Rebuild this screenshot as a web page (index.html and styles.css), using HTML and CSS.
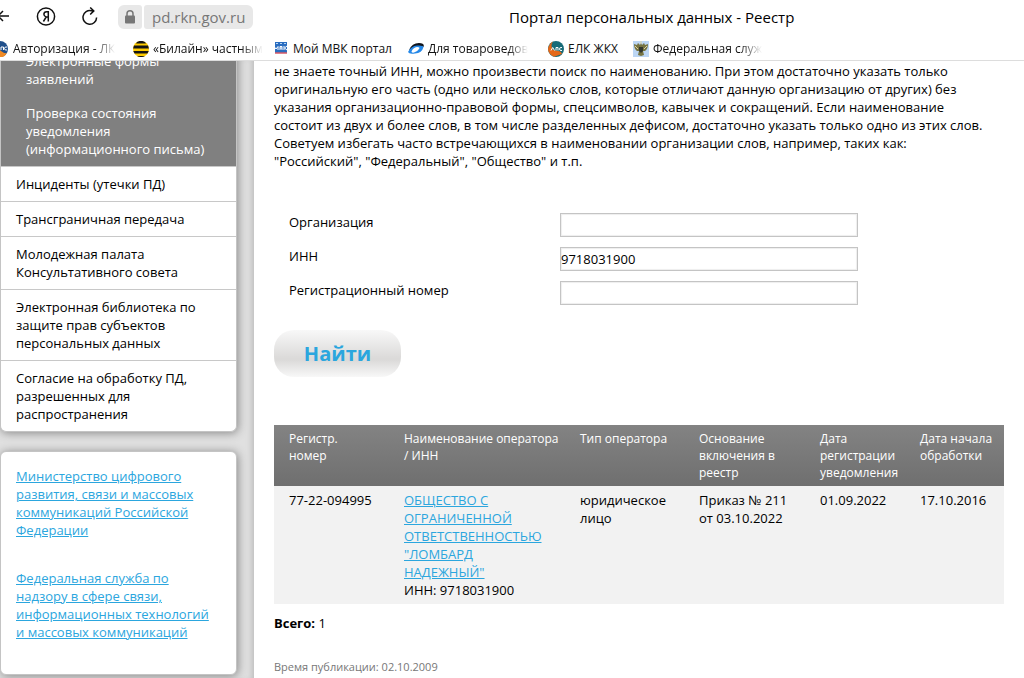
FILE: index.html
```html
<!DOCTYPE html>
<html lang="ru">
<head>
<meta charset="utf-8">
<title>Портал персональных данных - Реестр</title>
<link rel="stylesheet" href="styles.css">
</head>
<body>
<header class="browser">
  <div class="toolbar">
    <div class="nav">
      <button class="icon-btn back" aria-label="Назад"><svg width="12" height="18" viewBox="0 0 12 18"><path d="M-3 8H9M3 3L-2 8L3 13"/></svg></button>
      <button class="icon-btn ya" aria-label="Яндекс"><svg width="20" height="20" viewBox="0 0 20 20"><circle cx="10" cy="9.500" r="8.600"/><path d="M12.300 14.500V4.700H10.700C8.900 4.700 7.900 5.900 7.900 7.300C7.900 8.800 8.700 9.500 10.200 10H12.300M10.200 10L7.400 14.500"/></svg></button>
      <button class="icon-btn reload" aria-label="Обновить"><svg width="18" height="20" viewBox="0 0 18 20"><path d="M15.600 10.500A6.800 6.800 0 1 1 10.500 3.800H12.500M9.200 .5L12.800 3.900L9.200 7.500"/></svg></button>
      <button class="lock" aria-label="Защита"><svg width="12" height="14" viewBox="0 0 12 14"><rect x="1" y="5.500" width="10" height="8" rx="1" fill="#777"/><path d="M3 6V3.800A3 3 0 0 1 9 3.800V6" fill="none" stroke="#777" stroke-width="1.500"/></svg></button>
      <button class="host">pd.rkn.gov.ru</button>
    </div>
    <div class="page-title">Портал персональных данных - Реестр</div>
  </div>
  <nav class="bookmarks">
    <a href="#" class="bm bm-1"><svg width="16" height="16" viewBox="0 0 16 16"><circle cx="8" cy="8" r="8" fill="#1f4f8b"/><path d="M0 9Q5 7 9 10T15 12A8 8 0 0 1 0 9Z" fill="#f08a24"/><path d="M9 9V6H11.500V9M15 6Q12.500 5.500 12.500 7.500T15 9" fill="none" stroke="#fff" stroke-width="1"/></svg><span class="fade">Авторизация - ЛК</span></a>
    <a href="#" class="bm bm-2"><svg width="16" height="16" viewBox="0 0 16 16"><circle cx="8" cy="8" r="8" fill="#fc0"/><path d="M4 1A8 8 0 0 1 12 1L13 2.500H3ZM1 4.500H15L15.900 7.500H.1ZM.3 10H15.700L14.500 12.500H1.500ZM4 14.900H12A8 8 0 0 1 4 14.900Z" fill="#151515"/></svg><span class="fade">«Билайн» частным</span></a>
    <a href="#" class="bm bm-3"><svg width="16" height="16" viewBox="0 0 16 16"><path d="M2 1H14V12H2Z" fill="#2a6dc0"/><path d="M3 2.500H5M7 2.500H9M11 2.500H13" stroke="#b9d5f2"/><path d="M1 9V5.500L3 8L5 5.500V9M7 9V5.500H9V9M7 7H9M11 5V9M14 5L11.500 7L14 9" fill="none" stroke="#fff" stroke-width="1"/><path d="M2 12H14" stroke="#d75b68" stroke-width="1.500"/></svg><span>Мой МВК портал</span></a>
    <a href="#" class="bm bm-4"><svg width="16" height="16" viewBox="0 0 16 16"><path d="M1 9Q4 2 11 2Q17 2 15.500 6Q12 4 8 6T1 9Z" fill="#10141c"/><path d="M0 11Q3 5 9 4.500Q15 4 15.500 6Q14 12 7 12.500Q1 13.500 0 11Z" fill="#2588e8"/><path d="M3.500 10.500Q5 6.500 9 6Q12.500 6 11 8Q9 11 6 11.500Q3.500 12 3.500 10.500Z" fill="#fff"/></svg><span class="fade">Для товароведов</span></a>
    <a href="#" class="bm bm-5"><svg width="16" height="16" viewBox="0 0 16 16"><circle cx="8" cy="8" r="8" fill="#176b78"/><path d="M5 .6Q1 3 0 8Q0 13 6 15.700L14 13Q13 10 10 10L5 9Q2 5 5 .6Z" fill="#e46818"/><path d="M3 9.500L4.700 6.500L6.500 9.500M8 9.500V6.500H10V9.500M14 6.500Q11.500 6 11.500 8T14 9.500" fill="none" stroke="#fff" stroke-width="1"/></svg><span>ЕЛК ЖКХ</span></a>
    <a href="#" class="bm bm-6"><svg width="16" height="16" viewBox="0 0 16 16"><path d="M0 0H16V16H0Z" fill="#bcd6f4"/><path d="M7 4L5 2L4 4L1 3Q1 8 4 10L6 10L5 14L8 15L11 14L10 10L12 10Q15 8 15 3L12 4L11 2L9 4L8 2Z" fill="#767442"/><path d="M6 6H10V10L8 12L6 10Z" fill="#32372f"/><path d="M2 5L5 8M14 5L11 8M8 0V3" stroke="#ded3a2"/></svg><span class="fade">Федеральная служ</span></a>
  </nav>
</header>
<div class="page">
  <aside class="sidebar">
    <nav class="card menu">
      <div class="submenu">
        <a href="#">Электронные формы заявлений</a>
        <a href="#">Проверка состояния уведомления (информационного письма)</a>
      </div>
      <a href="#" class="item">Инциденты (утечки ПД)</a>
      <a href="#" class="item">Трансграничная передача</a>
      <a href="#" class="item">Молодежная палата Консультативного совета</a>
      <a href="#" class="item">Электронная библиотека по защите прав субъектов персональных данных</a>
      <a href="#" class="item">Согласие на обработку ПД, разрешенных для распространения</a>
    </nav>
    <div class="card links">
      <a href="#">Министерство цифрового развития, связи и массовых коммуникаций Российской Федерации</a>
      <a href="#">Федеральная служба по надзору в сфере связи, информационных технологий и массовых коммуникаций</a>
    </div>
  </aside>
  <main class="content">
    <p class="hint">не знаете точный ИНН, можно произвести поиск по наименованию. При этом достаточно указать только<br>оригинальную его часть (одно или несколько слов, которые отличают данную организацию от других) без<br>указания организационно-правовой формы, спецсимволов, кавычек и сокращений. Если наименование<br>состоит из двух и более слов, в том числе разделенных дефисом, достаточно указать только одно из этих слов.<br>Советуем избегать часто встречающихся в наименовании организации слов, например, таких как:<br>"Российский", "Федеральный", "Общество" и т.п.</p>
    <form class="search">
      <div class="fields">
        <label for="org">Организация</label><input id="org" type="text">
        <label for="inn">ИНН</label><input id="inn" type="text" value="9718031900">
        <label for="reg">Регистрационный номер</label><input id="reg" type="text">
      </div>
      <button type="button" class="find">Найти</button>
    </form>
    <table class="results">
      <colgroup><col class="c-num"><col class="c-name"><col class="c-type"><col class="c-base"><col class="c-date"><col></colgroup>
      <thead>
        <tr><th>Регистр.<br>номер</th><th>Наименование оператора / ИНН</th><th>Тип оператора</th><th>Основание включения в реестр</th><th>Дата регистрации уведомления</th><th>Дата начала обработки</th></tr>
      </thead>
      <tbody>
        <tr><td>77-22-094995</td><td><a href="#">ОБЩЕСТВО С ОГРАНИЧЕННОЙ ОТВЕТСТВЕННОСТЬЮ "ЛОМБАРД<br>НАДЕЖНЫЙ"</a><br>ИНН: 9718031900</td><td>юридическое лицо</td><td>Приказ № 211<br>от 03.10.2022</td><td>01.09.2022</td><td>17.10.2016</td></tr>
      </tbody>
    </table>
    <p class="total"><b>Всего:</b> 1</p>
    <p class="published">Время публикации: 02.10.2009</p>
  </main>
</div>
</body>
</html>
```
FILE: styles.css
```css
* { box-sizing: border-box; }
body {
  margin: 0;
  height: 100vh;
  overflow: hidden;
  display: flex;
  flex-direction: column;
  font: 13px/18px "Open Sans", "Noto Sans", sans-serif;
  color: #000;
  background: #fff;
}
button { border: 0; padding: 0; background: none; font: inherit; }
p { margin: 0; }
a { color: #2ba6de; }

.browser {
  flex: none;
  background: #fff;
  border-bottom: 1px solid #ddd;
}
.toolbar { display: flex; align-items: center; height: 34px; }
.nav { display: flex; align-items: center; width: 509px; }
.icon-btn { display: flex; }
.icon-btn svg { fill: none; stroke: #111; stroke-width: 1.5; }
.ya { margin-left: 24px; }
.reload { margin-left: 25px; }
.lock {
  display: flex;
  align-items: center;
  justify-content: center;
  width: 24px;
  height: 24px;
  margin-left: 19px;
  border-radius: 6px 3px 3px 6px;
  background: #e8e8e8;
}
.host {
  height: 24px;
  margin-left: 2px;
  padding: 0 8px;
  border-radius: 3px 6px 6px 3px;
  background: #e8e8e8;
  color: #777;
  font: 15px/24px "Open Sans", sans-serif;
}
.page-title { font: 15px/20px "Open Sans", sans-serif; white-space: nowrap; }
.bookmarks { display: flex; height: 26px; padding-top: 4px; }
.bm {
  flex: none;
  display: flex;
  align-items: center;
  gap: 4px;
  color: #111;
  text-decoration: none;
  font-size: 12px;
  white-space: nowrap;
}
.bm svg { flex: none; }
.bm-1 { width: 127px; margin-left: -8px; margin-right: 14px; gap: 5px; }
.bm-2 { width: 127px; margin-right: 13px; }
.bm-3 { width: 135px; }
.bm-4 { width: 124px; margin-right: 16px; }
.bm-5 { width: 85px; }
.bm-6 { width: 128px; }
.fade {
  -webkit-mask-image: linear-gradient(90deg, #000 80%, transparent);
  mask-image: linear-gradient(90deg, #000 80%, transparent);
}

.page { flex: 1; min-height: 0; display: flex; overflow: hidden; }
.sidebar {
  flex: none;
  width: 254px;
  padding-right: 17px;
  background: #e0e0e0;
  box-shadow: inset -6px 0 6px -4px #bbb;
}
.card {
  background: #fff;
  border: 1px solid #c4c4c4;
  border-radius: 6px;
  box-shadow: 1px 1px 10px #888;
}
.menu { margin-top: -10px; overflow: hidden; border-top: 0; border-radius: 0 0 6px 6px; }
.submenu {
  display: flex;
  flex-direction: column;
  gap: 16px;
  padding: 1px 20px 8px 25px;
  background: #808080;
}
.submenu a { color: #fff; text-decoration: none; }
.item {
  display: block;
  padding: 8px 20px 8px 15px;
  border-top: 1px solid #c8c8c8;
  color: #000;
  text-decoration: none;
}
.links {
  display: flex;
  flex-direction: column;
  gap: 30px;
  margin-top: 19px;
  padding: 15px 20px 33px 15px;
}

.content { flex: 1; min-width: 0; padding: 1px 20px 0; }
.hint { white-space: nowrap; }
.fields {
  display: grid;
  grid-template-columns: 271px minmax(0, 298px);
  row-gap: 10px;
  margin: 43px 0 0 15px;
}
.fields input {
  height: 24px;
  padding: 0;
  border: 1px solid #c4c4c4;
  border-radius: 0;
  box-shadow: inset 0 0 1px 1px #eee;
  font: inherit;
  color: #000;
}
.find {
  width: 127px;
  height: 47px;
  margin-top: 25px;
  border-radius: 20px;
  background: linear-gradient(#f8f8f8, #dbdad9 60%, #dbdad9 64%, #f8f8f8);
  color: #2ba6de;
  font-size: 20px;
  font-weight: 700;
}
.results {
  width: 100%;
  margin-top: 48px;
  border-collapse: collapse;
  table-layout: fixed;
  text-align: left;
}
.results thead { background: linear-gradient(#838383, #6f6f6f); }
.results th {
  padding: 5px 0 5px 15px;
  color: #fff;
  font-size: 12px;
  line-height: 17px;
  font-weight: 400;
  vertical-align: top;
}
.results td {
  padding: 5px 0 5px 15px;
  background: #f2f2f2;
  vertical-align: top;
}
.c-num { width: 115px; }
.c-name { width: 176px; }
.c-type { width: 119px; }
.c-base { width: 121px; }
.c-date { width: 100px; }
.total { margin-top: 10px; }
.published { margin-top: 26px; color: #777; font-size: 11px; }
```
